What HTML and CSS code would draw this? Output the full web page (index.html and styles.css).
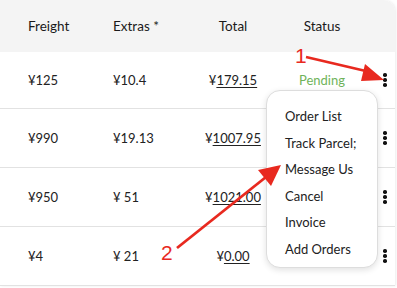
FILE: index.html
```html
<!DOCTYPE html>
<html lang="en">
<head>
    <meta charset="UTF-8">
    <meta name="viewport" content="width=device-width, initial-scale=1.0">
    <title>Orders</title>
    <link rel="stylesheet" href="styles.css">
</head>
<body>
    <div class="card">
        <div class="row head">
            <div class="cell first">Freight</div>
            <div class="cell">Extras *</div>
            <div class="cell center">Total</div>
            <div class="cell center">Status</div>
            <div class="cell"></div>
        </div>
        <div class="row first-row">
            <div class="cell first">¥125</div>
            <div class="cell">¥10.4</div>
            <div class="cell center">¥<u>179.15</u></div>
            <div class="cell center pending">Pending</div>
            <div class="cell kebab"><span></span><span></span><span></span></div>
        </div>
        <div class="row">
            <div class="cell first">¥990</div>
            <div class="cell">¥19.13</div>
            <div class="cell center">¥<u>1007.95</u></div>
            <div class="cell center"></div>
            <div class="cell kebab"><span></span><span></span><span></span></div>
        </div>
        <div class="row">
            <div class="cell first">¥950</div>
            <div class="cell">¥ 51</div>
            <div class="cell center">¥<u>1021.00</u></div>
            <div class="cell center"></div>
            <div class="cell kebab"><span></span><span></span><span></span></div>
        </div>
        <div class="row">
            <div class="cell first">¥4</div>
            <div class="cell">¥ 21</div>
            <div class="cell center">¥<u>0.00</u></div>
            <div class="cell center"></div>
            <div class="cell kebab"><span></span><span></span><span></span></div>
        </div>
    </div>

    <ul class="menu">
        <li>Order List</li>
        <li>Track Parcel;</li>
        <li>Message Us</li>
        <li>Cancel</li>
        <li>Invoice</li>
        <li>Add Orders</li>
    </ul>

    <svg class="marks" width="397" height="288" viewBox="0 0 397 288">
        <text x="295" y="63" class="num">1</text>
        <line x1="306" y1="57" x2="370" y2="72" stroke="#e8291f" stroke-width="2.8"/>
        <polygon points="365,64 384,80 361,81" fill="#e8291f"/>
        <text x="161" y="260" class="num">2</text>
        <line x1="177" y1="248" x2="266" y2="177" stroke="#e8291f" stroke-width="2.8"/>
        <polygon points="258,170 281,165 271,186" fill="#e8291f"/>
    </svg>
</body>
</html>
```
FILE: styles.css
```css
body {
    margin: 0;
    font-family: Lato, "Noto Sans", sans-serif;
    color: #222;
    background: #fff;
    width: 397px;
    height: 288px;
    overflow: hidden;
    position: relative;
}

.card {
    width: 395px;
    border-top-right-radius: 12px;
    box-shadow: 1px 0 3px rgba(0, 0, 0, 0.08);
    overflow: hidden;
}

.row {
    display: grid;
    grid-template-columns: 113px 85px 70px 108px 19px;
    align-items: center;
    height: 58px;
    border-bottom: 1px solid #e2e2e2;
    font-size: 13px;
}

.head {
    height: 52px;
    background: #f4f4f4;
    border-bottom: none;
    font-size: 13.5px;
    color: #1a1a1a;
}

.first-row {
    height: 56px;
}

.cell.first {
    padding-left: 28px;
}

.center {
    text-align: center;
}

u {
    text-underline-offset: 2px;
}

.pending {
    color: #6fb35a;
}

.kebab {
    display: flex;
    flex-direction: column;
    align-items: center;
    gap: 1.5px;
    padding-right: 1px;
}

.kebab span {
    width: 3.5px;
    height: 3.5px;
    border-radius: 50%;
    background: #111;
}

.menu {
    position: absolute;
    left: 266px;
    top: 90px;
    width: 112px;
    height: 178px;
    box-sizing: border-box;
    margin: 0;
    padding: 12px 0 0 18px;
    list-style: none;
    background: #fff;
    border: 1px solid #ddd;
    border-radius: 14px;
    box-shadow: 0 2px 6px rgba(0, 0, 0, 0.12);
    font-size: 13px;
}

.menu li {
    line-height: 26.6px;
}

.marks {
    position: absolute;
    left: 0;
    top: 0;
    pointer-events: none;
}

.num {
    font-family: "Liberation Sans", sans-serif;
    font-size: 21px;
    fill: #e8291f;
}
```
